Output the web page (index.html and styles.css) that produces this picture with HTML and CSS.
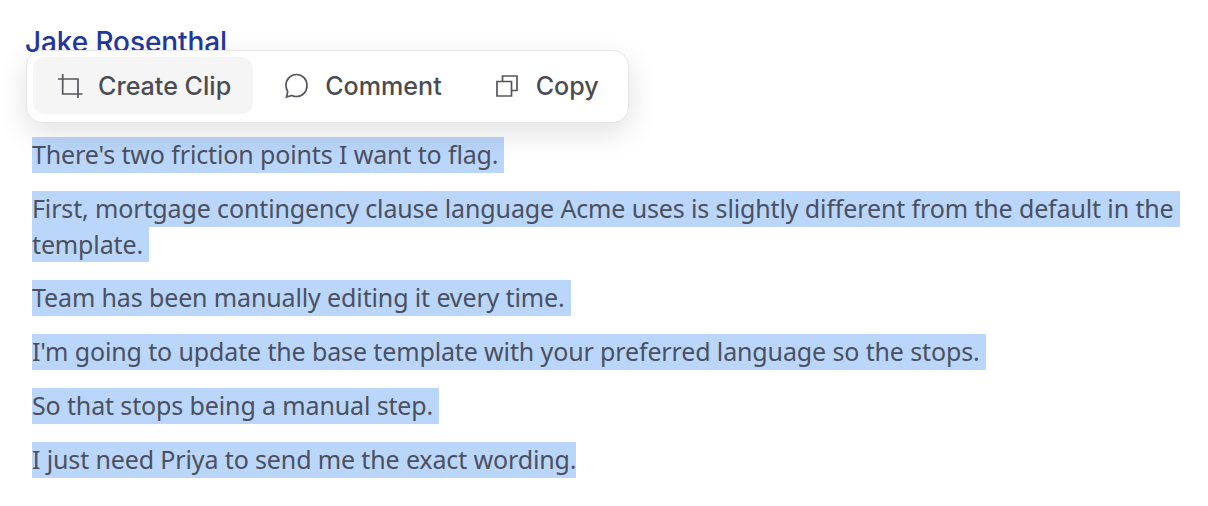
FILE: index.html
```html
<!DOCTYPE html>
<html lang="en">
<head>
<meta charset="utf-8">
<title>Transcript</title>
<link rel="stylesheet" href="styles.css">
</head>
<body>
<main class="page">
  <h2 class="speaker">Jake Rosenthal</h2>
  <div class="toolbar">
    <button class="tool active">
      <svg class="icon" viewBox="0 0 26 26"><path d="M5.700 1V21H25.500M1 6H21V25"/></svg>
      <span>Create Clip</span>
    </button>
    <button class="tool">
      <svg class="icon" viewBox="0 0 26 26"><path d="M12.500 1.500C18.500 1.500 23 6.200 23 12.500C23 18.800 18.500 23.500 12.500 23.500C10.800 23.500 9.300 23.100 7.900 22.400L2.500 24L3.700 18.500C2.600 16.700 2 14.700 2 12.500C2 6.200 6.500 1.500 12.500 1.500Z"/></svg>
      <span>Comment</span>
    </button>
    <button class="tool">
      <svg class="icon" viewBox="0 0 26 26"><path d="M2 8.500H16.500V23H2ZM7.500 8.500V3H22V17.500H16.500"/></svg>
      <span>Copy</span>
    </button>
  </div>
  <div class="body">
    <p class="para"><span class="line">There's two friction points I want to flag.</span></p>
    <p class="para"><span class="line">First, mortgage contingency clause language Acme uses is slightly different from the default in the</span><span class="line tail">template.</span></p>
    <p class="para"><span class="line">Team has been manually editing it every time.</span></p>
    <p class="para"><span class="line">I'm going to update the base template with your preferred language so the stops.</span></p>
    <p class="para"><span class="line">So that stops being a manual step.</span></p>
    <p class="para"><span class="line end">I just need Priya to send me the exact wording.</span></p>
  </div>
</main>
</body>
</html>
```
FILE: styles.css
```css
* { box-sizing: border-box; }
html, body { margin: 0; background: #fff; }
body { font-family: "Noto Sans", "Liberation Sans", sans-serif; width: 1208px; height: 506px; overflow: hidden; }
.page { position: relative; padding: 26px 0 0 26px; }
.speaker { margin: 0 0 0 -1px; font-size: 28px; font-weight: 500; line-height: 32px; color: #24389c; font-family: Inter, sans-serif; letter-spacing: -0.1px; }
.toolbar {
  position: absolute; left: 26px; top: 50px; width: 603px; height: 73px;
  display: flex; align-items: flex-start; padding: 6px; gap: 7px;
  background: #fff; border: 1px solid #e7e7e7; border-radius: 16px;
  box-shadow: 0 10px 30px rgba(0,0,0,.12);
}
.tool {
  display: flex; align-items: center; gap: 15px; height: 57px; padding: 0 22px 0 24px;
  border: 0; border-radius: 12px; background: transparent; color: #4b4c52;
  font-family: Inter, sans-serif; font-size: 25.100px; font-weight: 500; white-space: nowrap;
}
.tool.active { background: #f5f5f5; }
.icon { width: 26px; height: 26px; fill: none; stroke: #55565c; stroke-width: 1.7; flex: none; }
.body { margin-top: 79px; padding-left: 6px; }
.para { margin: 0 0 18px; font-size: 25px; line-height: 35.800px; letter-spacing: -0.130px; color: #4b5061; }
.line { display: block; width: fit-content; height: 35.800px; padding-right: 6px; background: #bad6fb; white-space: nowrap; }
.line.end { padding-right: 0; }
```
